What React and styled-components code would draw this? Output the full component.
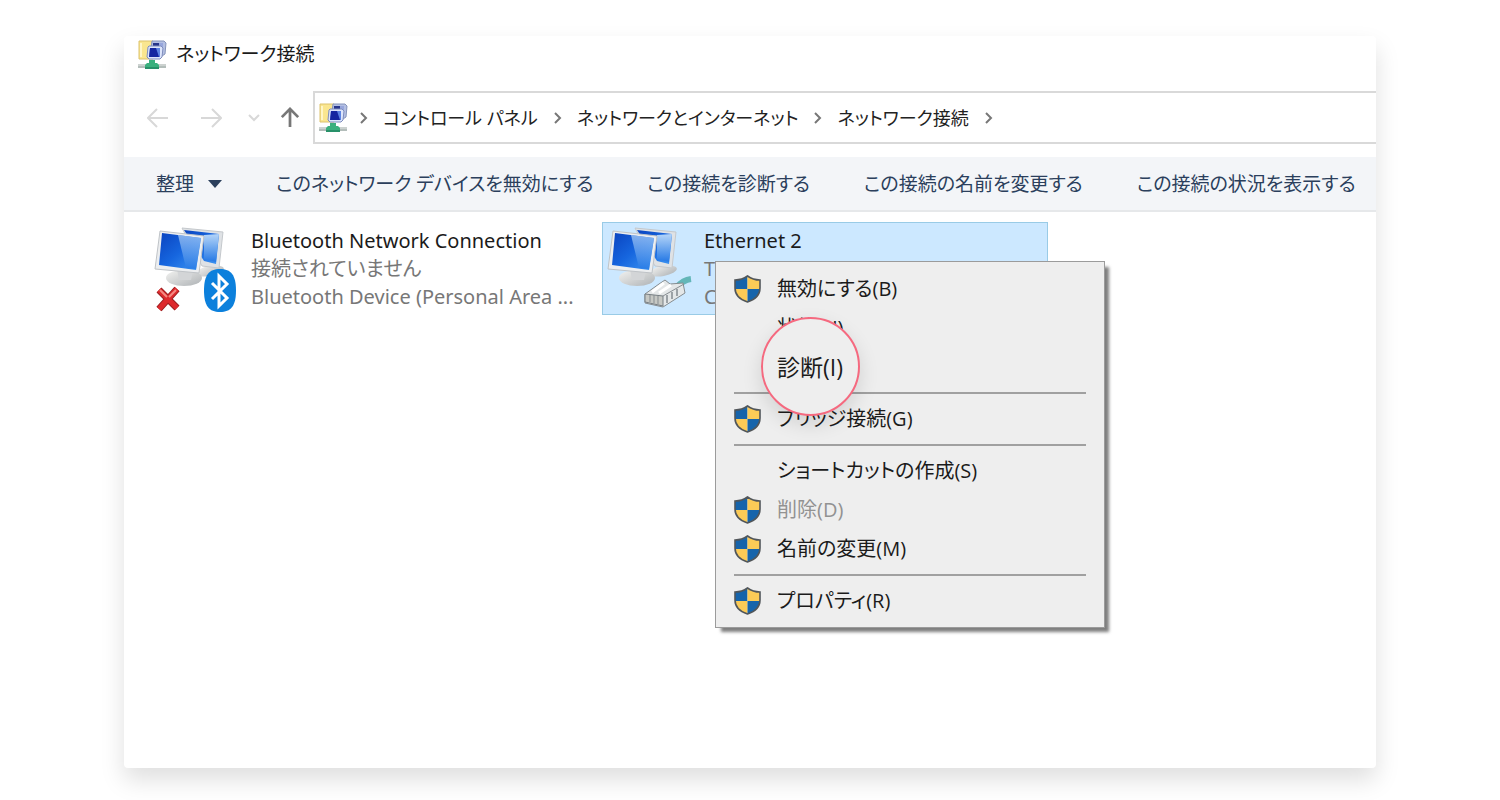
import React from 'react';
import styled, { createGlobalStyle } from 'styled-components';

const GlobalStyle = createGlobalStyle`
  * {
    box-sizing: border-box;
  }
  body {
    margin: 0;
    background: #fff;
    color: #1b1b1b;
    font-family: 'Noto Sans', 'Noto Sans CJK JP', sans-serif;
    font-size: 20px;
    line-height: 28px;
    /* proportional kana, as in the system UI font */
    font-feature-settings: 'palt';
  }
  button {
    padding: 0;
    border: 0;
    background: none;
    color: inherit;
    font: inherit;
    font-feature-settings: inherit;
    white-space: nowrap;
    text-align: left;
  }
`;

const toolbarActions = [
  'このネットワーク デバイスを無効にする',
  'この接続を診断する',
  'この接続の名前を変更する',
  'この接続の状況を表示する',
];

const crumbs = ['コントロール パネル', 'ネットワークとインターネット', 'ネットワーク接続'];

const menuGroups = [
  [
    { label: '無効にする(B)', shield: true },
    { label: '状態(U)' },
    { label: '診断(I)', spotlight: true },
  ],
  [{ label: 'ブリッジ接続(G)', shield: true }],
  [
    { label: 'ショートカットの作成(S)' },
    { label: '削除(D)', shield: true, disabled: true },
    { label: '名前の変更(M)', shield: true },
  ],
  [{ label: 'プロパティ(R)', shield: true }],
];

const Page = styled.div`
  padding: 36px 124px 32px;
`;

const Window = styled.main`
  min-height: calc(100vh - 68px);
  border-radius: 4px;
  background: #fff;
  box-shadow: 0 12px 24px rgba(0, 0, 0, 0.13);
`;

const TitleBar = styled.header`
  display: flex;
  align-items: center;
  gap: 9px;
  height: 36px;
  padding-left: 14px;
`;

const Title = styled.h1`
  margin: 0;
  font-size: 19px;
  font-weight: normal;
`;

const NavBar = styled.nav`
  display: flex;
  align-items: center;
  margin-top: 19px;
  padding-left: 23px;
`;

const NavButtons = styled.div`
  display: grid;
  grid-template-columns: 53px 48px 32px 33px;
  align-items: center;
`;

const NavButton = styled.button`
  display: flex;
  color: ${props => (props.disabled ? '#d8d8d8' : '#777')};
`;

const AddressBar = styled.div`
  display: flex;
  flex: 1;
  align-items: center;
  gap: 15px;
  height: 53px;
  padding-left: 4px;
  border: 2px solid #d9d9d9;
  border-right: 0;
  font-size: 18px;
  white-space: nowrap;
  overflow: hidden;
`;

const AddressIcon = styled.span`
  display: flex;
  margin-right: -4px;
`;

const Crumb = styled.a`
  color: #222;
  text-decoration: none;
`;

const Toolbar = styled.div`
  display: flex;
  align-items: center;
  gap: 54px;
  height: 55px;
  margin-top: 13px;
  padding-left: 32px;
  border-bottom: 2px solid #e6e8ea;
  background: #f3f5f8;
  color: #2b3f5c;
  font-size: 19px;
`;

const ToolbarButton = styled.button`
  display: flex;
  align-items: center;
  gap: 14px;
`;

const Connections = styled.section`
  display: flex;
  gap: 7px;
  padding: 10px 25px;
`;

const Tile = styled.article`
  position: relative;
  display: flex;
  flex: 0 0 446px;
  height: 93px;
  border: 1px solid ${props => (props.selected ? '#99cbe6' : 'transparent')};
  background: ${props => (props.selected ? '#cce8ff' : 'none')};
`;

const TileText = styled.div`
  padding: 4px 0 0 5px;
`;

const TileName = styled.h2`
  margin: 0;
  font-size: inherit;
  font-weight: normal;
`;

const TileDetail = styled.p`
  margin: 0;
  color: #777;
`;

const Menu = styled.div`
  position: absolute;
  top: 38px;
  left: 112px;
  width: 390px;
  padding: 7px 18px;
  border: 1px solid #9b9b9b;
  background: #eee;
  box-shadow: 5px 5px 3px -1px rgba(0, 0, 0, 0.5);
  font-family: 'Open Sans', 'Noto Sans CJK JP', sans-serif;
`;

const MenuGroup = styled.div`
  & + & {
    margin-top: 6px;
    padding-top: 5px;
    border-top: 2px solid #a0a0a0;
  }
`;

const MenuItem = styled.button`
  position: ${props => (props.$spotlight ? 'relative' : 'static')};
  z-index: 1;
  display: flex;
  align-items: center;
  gap: 16px;
  width: 100%;
  height: 39px;
  color: ${props => (props.disabled ? '#929292' : '#1b1b1b')};
  font-size: ${props => (props.$spotlight ? 23 : 20)}px;
`;

const IconSlot = styled.span`
  display: flex;
  width: 27px;
`;

const Spotlight = styled.span`
  position: absolute;
  top: -30px;
  left: 27px;
  z-index: -1;
  width: 99px;
  height: 99px;
  border: 2px solid #f5697f;
  border-radius: 50%;
  background: #eee;
  box-shadow: 0 8px 20px rgba(0, 0, 0, 0.12);
`;

const NetworkIcon = () => (
  <svg width="29" height="29" viewBox="0 0 29 29" aria-hidden="true">
    <path d="M1 1h14v18H1z" fill="#fae68f" stroke="#dcc26c" />
    <path d="M3 3v14" stroke="#fff6c8" strokeWidth="2" />
    <path d="M14 1h12l2 2-1 11-3 2H12z" fill="#b3bfe3" stroke="#8593ba" />
    <path d="M16 3h9v9h-9z" fill="#97a6dc" />
    <path d="M15 3h6v3h-6z" fill="#27358a" />
    <path d="M11 6h12l2 2-1 9-2 2H11l-2-2 1-10z" fill="#dde5fb" stroke="#7f8dbd" />
    <path d="M12 8h10v9H11z" fill="#5c83e2" />
    <path d="M12 8h6l3 9H11z" fill="#1526a0" />
    <path d="M0 26h28" stroke="#ccd2d0" strokeWidth="4" />
    <path d="M0 27h28" stroke="#9aa8a4" />
    <path d="M11 20h6v3h2l2 2v4H7v-4l2-2h2z" fill="#3bb07e" />
    <path d="M7 28h14" stroke="#289169" strokeWidth="2" />
  </svg>
);

const ArrowIcon = ({ turn = 0, bold }) => (
  <svg width={bold ? 20 : 22} height="22" viewBox="0 0 22 22" fill="none" aria-hidden="true">
    <path
      d="M21 11H2M10 2l-9 9 9 9"
      transform={`rotate(${turn} 11 11)`}
      stroke="currentColor"
      strokeWidth={bold ? 3 : 2}
    />
  </svg>
);

const HistoryIcon = () => (
  <svg width="12" height="8" viewBox="0 0 12 8" fill="none" aria-hidden="true">
    <path d="M1 1l5 5 5-5" stroke="currentColor" strokeWidth="2" />
  </svg>
);

const CrumbArrow = () => (
  <svg width="9" height="12" viewBox="0 0 9 12" fill="none" aria-hidden="true">
    <path d="M2 1l5 5-5 5" stroke="#777" strokeWidth="2" />
  </svg>
);

const ShieldIcon = () => (
  <svg width="27" height="28" viewBox="0 0 27 28" aria-hidden="true">
    <path d="M13.5 1Q8 5 1 5v9H13.5z" fill="#1664ab" />
    <path d="M13.5 1Q19 5 26 5v9H13.5z" fill="#fccb57" />
    <path d="M1 14Q2 23 13.5 27V14z" fill="#fccb57" />
    <path d="M26 14Q25 23 13.5 27V14z" fill="#1664ab" />
    <path
      d="M13.5 1Q8 5 1 5v8q0 10 12.5 14Q26 23 26 13V5q-7 0-12.5-4z"
      fill="none"
      stroke="#51565a"
      strokeWidth="1.6"
    />
  </svg>
);

const Monitors = () => (
  <>
    <defs>
      <linearGradient id="screen" x1="0" y1="0" x2="1" y2="1">
        <stop offset="0" stopColor="#0a43bf" />
        <stop offset="0.5" stopColor="#1666df" />
        <stop offset="1" stopColor="#3f97f2" />
      </linearGradient>
      <linearGradient id="glare" x1="0" y1="0" x2="0" y2="1">
        <stop offset="0" stopColor="#b5d5f8" />
        <stop offset="1" stopColor="#2478e5" />
      </linearGradient>
      <linearGradient id="stand" x1="0" y1="0" x2="1" y2="1">
        <stop offset="0" stopColor="#f3f3f1" />
        <stop offset="1" stopColor="#aeb2b5" />
      </linearGradient>
    </defs>
    <ellipse cx="60" cy="48" rx="14" ry="5" fill="url(#stand)" transform="rotate(-10 60 48)" />
    <path d="M32 5l41 4-4 36-17-2z" fill="#dfe2e5" stroke="#c4c8cc" />
    <path d="M34 7l35 4-3 30-12-3z" fill="url(#screen)" />
    <path d="M54 12l15-1-3 28-12-3z" fill="url(#glare)" />
    <ellipse cx="34" cy="55" rx="18" ry="8" fill="url(#stand)" />
    <path d="M27 46l16 2-2 9H29z" fill="#d3d5d7" />
    <path d="M10 8l44 5-5 37-44-4z" fill="#eceef0" stroke="#bfc3c7" />
    <path d="M12 10l39 5-5 32-37-5z" fill="url(#screen)" />
    <path d="M28 12l23 3-5 31-10-1z" fill="url(#glare)" opacity="0.7" />
  </>
);

const BluetoothIcon = () => (
  <svg width="96" height="91" viewBox="0 0 96 91" aria-hidden="true">
    <Monitors />
    <path d="M9 67l18 18M27 66L9 86" stroke="#981e20" strokeWidth="7" />
    <path d="M9 67l18 18M27 66L9 86" stroke="#dd2a2d" strokeWidth="5" />
    <path d="M10 67l7 7M26 67l-7 7" stroke="#f48b83" strokeWidth="2" />
    <path
      d="M70 46C81 46 86 52 86 67.500S81 89 70 89 54 83 54 67.500 59 46 70 46z"
      fill="#0c80dc"
    />
    <path
      d="M62 60l15 15-8 8V53l8 8-15 15"
      fill="none"
      stroke="#fff"
      strokeWidth="3"
    />
  </svg>
);

const EthernetIcon = () => (
  <svg width="96" height="91" viewBox="0 0 96 91" aria-hidden="true">
    <Monitors />
    <path d="M74 64q6-7 14-8" fill="none" stroke="#63b6b8" strokeWidth="6" />
    <path d="M42 71l14-10 6-4 5 4 13-1 2 10-22 14-18-4z" fill="#e4e7e8" stroke="#858c90" />
    <path d="M42 71l18 2v10l-18-4z" fill="#c6c8c4" stroke="#777e83" />
    <path d="M60 73l21-12M47 72v7M51 72v8M55 73v8" stroke="#878d91" />
    <path d="M49 69l12-9M56 70l12-8" stroke="#fff" strokeWidth="3" />
    <path d="M64 72v8M69 69v7M74 66v7" stroke="#9ba1a5" strokeWidth="2" />
  </svg>
);

const ContextMenu = () => (
  <Menu role="menu">
    {menuGroups.map((group, i) => (
      <MenuGroup key={i} role="group">
        {group.map(({ label, shield, disabled, spotlight }) => (
          <MenuItem key={label} role="menuitem" disabled={disabled} $spotlight={spotlight}>
            {spotlight && <Spotlight />}
            <IconSlot>{shield && <ShieldIcon />}</IconSlot>
            {label}
          </MenuItem>
        ))}
      </MenuGroup>
    ))}
  </Menu>
);

const App = () => (
  <Page>
    <GlobalStyle />
    <Window>
      <TitleBar>
        <NetworkIcon />
        <Title>ネットワーク接続</Title>
      </TitleBar>
      <NavBar>
        <NavButtons>
          <NavButton disabled aria-label="戻る"><ArrowIcon /></NavButton>
          <NavButton disabled aria-label="進む"><ArrowIcon turn={180} /></NavButton>
          <NavButton disabled aria-label="履歴"><HistoryIcon /></NavButton>
          <NavButton aria-label="上へ"><ArrowIcon turn={90} bold /></NavButton>
        </NavButtons>
        <AddressBar>
          <AddressIcon><NetworkIcon /></AddressIcon>
          <CrumbArrow />
          {crumbs.map(crumb => (
            <React.Fragment key={crumb}>
              <Crumb href="#">{crumb}</Crumb>
              <CrumbArrow />
            </React.Fragment>
          ))}
        </AddressBar>
      </NavBar>
      <Toolbar>
        <ToolbarButton>
          整理
          <svg width="14" height="8" viewBox="0 0 14 8" aria-hidden="true">
            <path d="M0 0h14L7 8z" fill="currentColor" />
          </svg>
        </ToolbarButton>
        {toolbarActions.map(action => (
          <ToolbarButton key={action}>{action}</ToolbarButton>
        ))}
      </Toolbar>
      <Connections>
        <Tile>
          <BluetoothIcon />
          <TileText>
            <TileName>Bluetooth Network Connection</TileName>
            <TileDetail>接続されていません</TileDetail>
            <TileDetail>Bluetooth Device (Personal Area ...</TileDetail>
          </TileText>
        </Tile>
        <Tile selected>
          <EthernetIcon />
          <TileText>
            <TileName>Ethernet 2</TileName>
            <TileDetail>T</TileDetail>
            <TileDetail>C</TileDetail>
          </TileText>
          <ContextMenu />
        </Tile>
      </Connections>
    </Window>
  </Page>
);

export default App;
